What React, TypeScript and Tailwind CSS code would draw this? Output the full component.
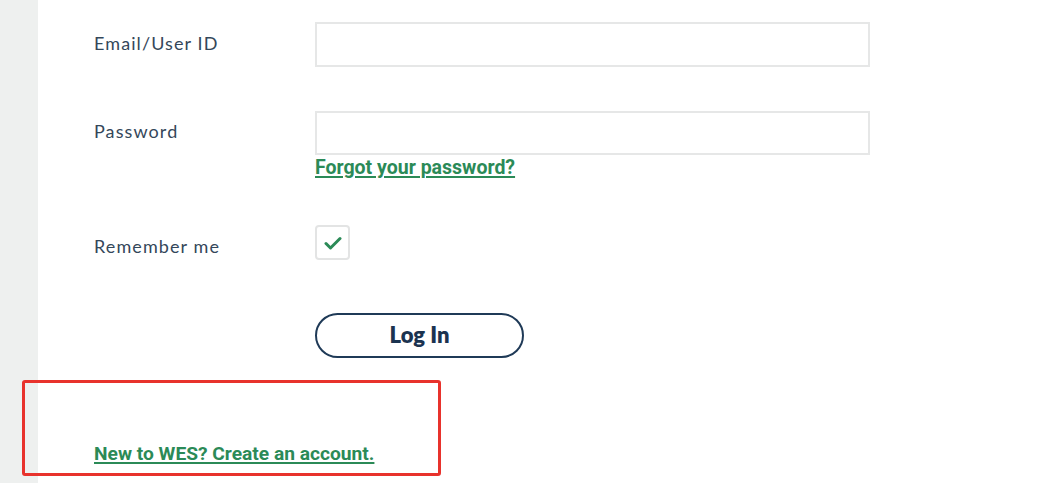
import { useState } from "react";

export default function App() {
  const [remember, setRemember] = useState(true);

  return (
    <div className="relative flex h-[483px] w-[1051px] overflow-hidden bg-white">
      {/* left gray rail */}
      <div className="w-[38px] shrink-0 bg-[#eef0ef]" />

      <div className="flex-1 pl-[56px] pt-[22px]">
        <form className="grid grid-cols-[221px_555px] items-start">
          {/* Email */}
          <label
            htmlFor="email"
            className="flex h-[43px] items-center font-['Lato',sans-serif] text-[18px] tracking-[1.1px] text-[#34475a]"
          >
            Email/User ID
          </label>
          <input
            id="email"
            type="text"
            className="h-[45px] w-full border-2 border-[#e6e7e7] bg-white px-3 outline-none"
          />

          {/* Password */}
          <label
            htmlFor="password"
            className="mt-[44px] flex h-[41px] items-center font-['Lato',sans-serif] text-[18px] tracking-[1.1px] text-[#34475a]"
          >
            Password
          </label>
          <div className="mt-[44px] flex flex-col items-start">
            <input
              id="password"
              type="password"
              className="h-[44px] w-full border-2 border-[#e6e7e7] bg-white px-3 outline-none"
            />
            <a
              href="#"
              className="font-['Roboto',sans-serif] text-[19.5px] font-bold leading-[25px] text-[#2b8a57] underline decoration-2 underline-offset-2"
            >
              Forgot your password?
            </a>
          </div>

          {/* Remember me */}
          <label
            htmlFor="remember"
            className="mt-[49px] flex h-[35px] items-center font-['Lato',sans-serif] text-[18px] tracking-[1.1px] text-[#34475a]"
          >
            Remember me
          </label>
          <div className="mt-[45px]">
            <button
              id="remember"
              type="button"
              onClick={() => setRemember(!remember)}
              className="flex h-[35px] w-[35px] items-center justify-center rounded-[4px] border-2 border-[#e3e4e4] bg-white"
            >
              {remember && (
                <svg width="18" height="14" viewBox="0 0 18 14" fill="none">
                  <path
                    d="M2 7.5l4.5 4.5L16 2.5"
                    stroke="#2b8a57"
                    strokeWidth="3"
                    strokeLinecap="round"
                    strokeLinejoin="round"
                  />
                </svg>
              )}
            </button>
          </div>

          {/* Log in */}
          <div />
          <div className="mt-[49px]">
            <button
              type="submit"
              className="h-[45px] w-[209px] rounded-full border-2 border-[#1f3a57] bg-white pb-[2px] font-['Lato',sans-serif] text-[22px] font-extrabold text-[#1b3350]"
            >
              Log In
            </button>
          </div>
        </form>

        <a
          href="#"
          className="mt-[83px] inline-block font-['Roboto',sans-serif] text-[19.2px] font-bold leading-[25px] text-[#2b8a57] underline decoration-2 underline-offset-2"
        >
          New to WES? Create an account.
        </a>
      </div>

      {/* red annotation box */}
      <div className="pointer-events-none absolute left-[22px] top-[380px] h-[96px] w-[419px] rounded-[3px] border-[3px] border-[#e8322c]" />
    </div>
  );
}
